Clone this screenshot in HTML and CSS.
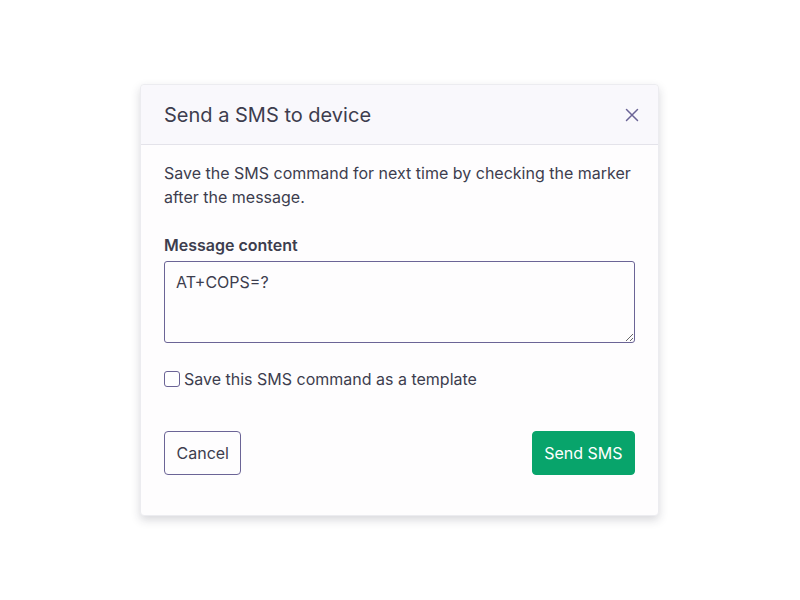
FILE: index.html
```html
<!DOCTYPE html>
<html>
<head>
<meta charset="utf-8">
<link rel="stylesheet" href="styles.css">
</head>
<body>
<div class="stage">
  <div class="modal">
    <div class="modal-header">
      <h2 class="modal-title">Send a SMS to device</h2>
      <button class="close" aria-label="Close">
        <svg width="14" height="14" viewBox="0 0 14 14"><path d="M1.5 1.5L12.5 12.5M12.5 1.5L1.5 12.5" stroke="#6b6496" stroke-width="1.5" fill="none" stroke-linecap="round"/></svg>
      </button>
    </div>
    <div class="modal-body">
      <p class="intro">Save the SMS command for next time by checking the marker after the message.</p>
      <label class="field-label" for="msg">Message content</label>
      <textarea id="msg" class="field">AT+COPS=?</textarea>
      <label class="check">
        <span class="box"></span>
        <span>Save this SMS command as a template</span>
      </label>
      <div class="actions">
        <button class="btn btn-outline">Cancel</button>
        <button class="btn btn-primary">Send SMS</button>
      </div>
    </div>
  </div>
</div>
</body>
</html>
```

FILE: styles.css
```css
* { box-sizing: border-box; }
html, body { margin: 0; padding: 0; background: #ffffff; }
body {
  font-family: Inter, "Noto Sans", sans-serif;
  color: #3d3d4e;
  width: 800px;
  height: 600px;
}
.stage {
  padding-top: 84px;
  padding-left: 140px;
}
.modal {
  width: 519px;
  background: #fefdfe;
  border-radius: 4px;
  border: 1px solid #ececf0;
  box-shadow: 0 4px 10px rgba(40, 40, 60, 0.18);
}
.modal-header {
  height: 60px;
  display: flex;
  align-items: center;
  justify-content: space-between;
  padding: 0 18px 0 23px;
  background: #f9f8fc;
  border-bottom: 1px solid #e4e3ea;
  border-radius: 4px 4px 0 0;
}
.modal-title {
  margin: 0;
  font-size: 20px;
  font-weight: 400;
  color: #3d3d4e;
}
.close {
  background: none;
  border: 0;
  padding: 0;
  width: 16px;
  height: 16px;
  display: flex;
  align-items: center;
  justify-content: center;
}
.modal-body {
  padding: 16px 23px 40px 23px;
  display: flex;
  flex-direction: column;
  font-size: 16px;
  line-height: 24px;
}
.intro { margin: 0; }
.field-label {
  margin-top: 24px;
  font-weight: 600;
}
.field {
  margin-top: 4px;
  height: 82px;
  width: 100%;
  border: 1px solid #6b6496;
  border-radius: 3px;
  padding: 8px 11px;
  font-family: Inter, "Noto Sans", sans-serif;
  font-size: 16px;
  line-height: 24px;
  color: #3d3d4e;
  background: #fefdfe;
  resize: vertical;
}
.check {
  margin-top: 24px;
  display: flex;
  align-items: center;
  gap: 4px;
}
.box {
  width: 16px;
  height: 16px;
  border: 1px solid #6b6496;
  border-radius: 3px;
  background: #fff;
}
.actions {
  margin-top: 40px;
  display: flex;
  justify-content: space-between;
}
.btn {
  height: 44px;
  font-family: Inter, "Noto Sans", sans-serif;
  font-size: 16px;
  border-radius: 4px;
  padding: 0 11.5px;
  white-space: nowrap;
}
.btn-outline {
  background: #fefdfe;
  border: 1px solid #6b6496;
  color: #3d3d4e;
}
.btn-primary {
  background: #08a46b;
  border: 1px solid #08a46b;
  color: #ffffff;
}
```
